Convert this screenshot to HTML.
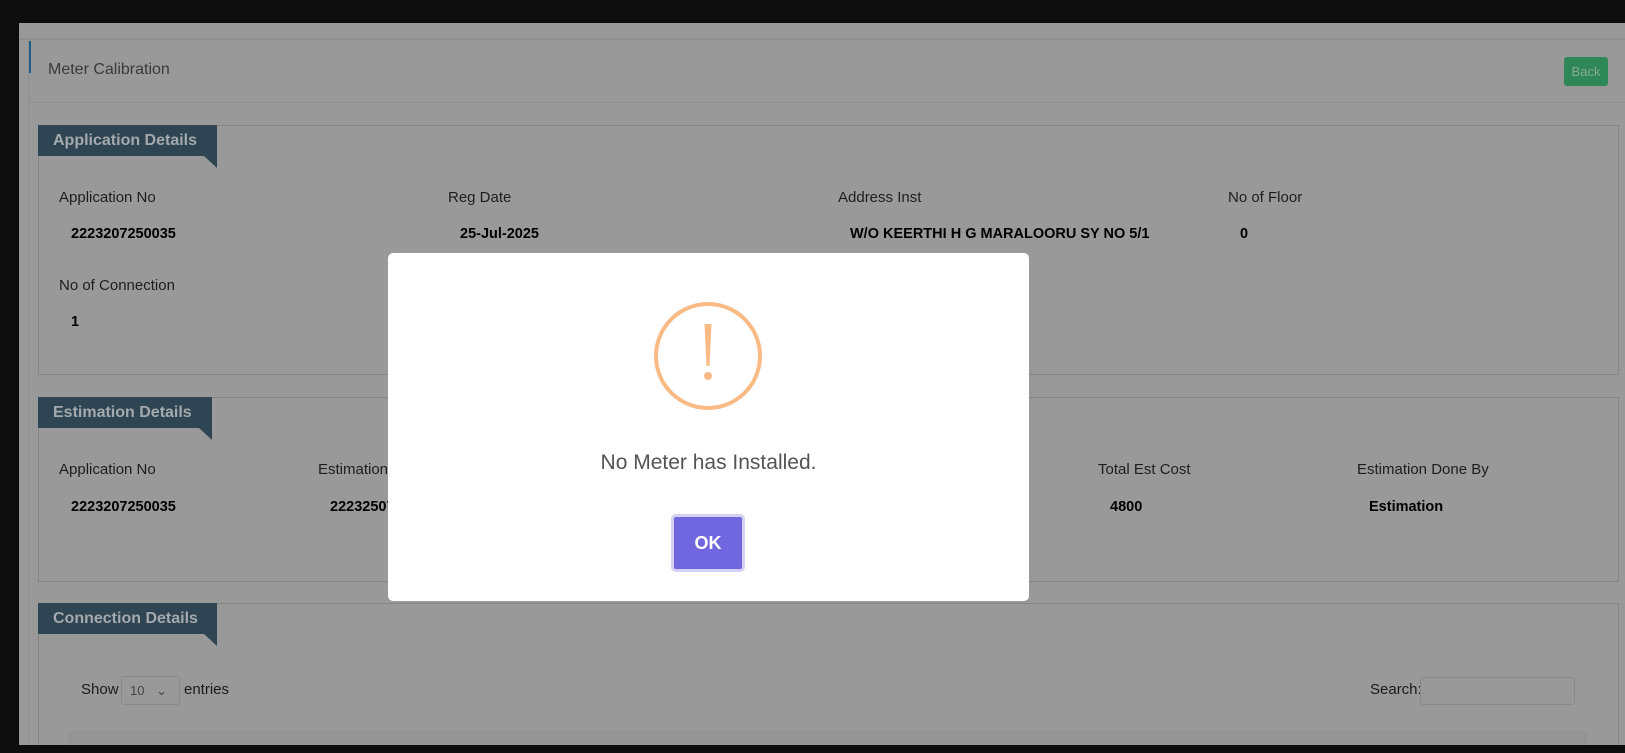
<!DOCTYPE html>
<html><head><meta charset="utf-8"><style>
*{margin:0;padding:0;box-sizing:border-box}
html,body{width:1625px;height:753px;overflow:hidden}
body{background:#0d0d0d;position:relative;font-family:"Liberation Sans",sans-serif}
.a{position:absolute}
.page{left:19px;top:23px;width:1606px;height:722px;background:#999}
.lbl{position:absolute;font-size:15px;color:#1e1e1e}
.val{position:absolute;font-size:14.5px;font-weight:bold;color:#000}
.box{position:absolute;border:1px solid #858585}
.tab{position:absolute;background:#2f4553;color:#a3a9ad;font-weight:bold;font-size:16px;padding-left:15px;line-height:31px}
.fold{position:absolute;width:0;height:0;border-top:12px solid #2f4553;border-left:13px solid transparent}
</style></head><body>
<div class="a page"></div>
<div class="a" style="left:19px;top:38px;width:1606px;height:2px;background:#8e8e8e"></div>
<div class="a" style="left:28px;top:41px;width:3px;height:32px;background:#1d5d88"></div>
<div class="a" style="left:28px;top:41px;width:1px;height:704px;background:#8f8f8f"></div>
<div class="a" style="left:28px;top:102px;width:1597px;height:1px;background:#8f8f8f"></div>
<div class="a" style="left:48px;top:61px;font-size:16px;color:#3a3a3a">Meter Calibration</div>
<div class="a" style="left:1564px;top:57px;width:44px;height:29px;background:#2e8757;border-radius:3px;color:#8aa894;font-size:13px;text-align:center;line-height:29px">Back</div>

<div class="box" style="left:38px;top:125px;width:1581px;height:250px"></div>
<div class="tab" style="left:38px;top:125px;width:179px;height:31px">Application Details</div>
<div class="fold" style="left:204px;top:156px"></div>
<div class="lbl" style="left:59px;top:189px">Application No</div>
<div class="lbl" style="left:448px;top:189px">Reg Date</div>
<div class="lbl" style="left:838px;top:189px">Address Inst</div>
<div class="lbl" style="left:1228px;top:189px">No of Floor</div>
<div class="val" style="left:71px;top:226px">2223207250035</div>
<div class="val" style="left:460px;top:226px">25-Jul-2025</div>
<div class="val" style="left:850px;top:226px">W/O KEERTHI H G MARALOORU SY NO 5/1</div>
<div class="val" style="left:1240px;top:226px">0</div>
<div class="lbl" style="left:59px;top:277px">No of Connection</div>
<div class="val" style="left:71px;top:314px">1</div>

<div class="box" style="left:38px;top:397px;width:1581px;height:185px"></div>
<div class="tab" style="left:38px;top:397px;width:174px;height:31px">Estimation Details</div>
<div class="fold" style="left:199px;top:428px"></div>
<div class="lbl" style="left:59px;top:461px">Application No</div>
<div class="lbl" style="left:318px;top:461px">Estimation No</div>
<div class="lbl" style="left:1098px;top:461px">Total Est Cost</div>
<div class="lbl" style="left:1357px;top:461px">Estimation Done By</div>
<div class="val" style="left:71px;top:499px">2223207250035</div>
<div class="val" style="left:330px;top:499px">2223250725</div>
<div class="val" style="left:1110px;top:499px">4800</div>
<div class="val" style="left:1369px;top:499px">Estimation</div>

<div class="box" style="left:38px;top:603px;width:1581px;height:142px;border-bottom:none"></div>
<div class="tab" style="left:38px;top:603px;width:179px;height:31px">Connection Details</div>
<div class="fold" style="left:204px;top:634px"></div>
<div class="lbl" style="left:81px;top:681px;color:#1a1a1a">Show</div>
<div class="a" style="left:121px;top:676px;width:59px;height:29px;border:1px solid #8a8a8a;border-radius:3px;font-size:13px;color:#444;padding:6px 8px">10 <span style="margin-left:8px">&#8964;</span></div>
<div class="lbl" style="left:184px;top:681px;color:#1a1a1a">entries</div>
<div class="lbl" style="left:1370px;top:681px;color:#1a1a1a">Search:</div>
<div class="a" style="left:1420px;top:677px;width:155px;height:28px;border:1px solid #8a8a8a;border-radius:3px"></div>
<div class="a" style="left:68px;top:731px;width:1519px;height:14px;background:#949494"></div>
<div class="a" style="left:0;top:745px;width:1625px;height:8px;background:#0d0d0d"></div>

<div class="a" style="left:388px;top:253px;width:641px;height:348px;background:#fff;border-radius:5px"></div>
<svg class="a" style="left:652px;top:300px" width="112" height="112" viewBox="0 0 112 112">
<circle cx="56" cy="56" r="52" fill="none" stroke="#f8bb86" stroke-width="4"/>
<path d="M52.5 24 L59.5 24 L57.5 66 L54.5 66 Z" fill="#f8bb86"/>
<circle cx="56" cy="76" r="4" fill="#f8bb86"/>
</svg>
<div class="a" style="left:388px;top:451px;width:641px;text-align:center;font-size:21px;color:#545454">No Meter has Installed.</div>
<div class="a" style="left:671px;top:514px;width:74px;height:58px;border:3px solid #d4d0f6;border-radius:5px;background:#7066e0;color:#fff;font-weight:bold;font-size:18px;text-align:center;line-height:52px">OK</div>
</body></html>
